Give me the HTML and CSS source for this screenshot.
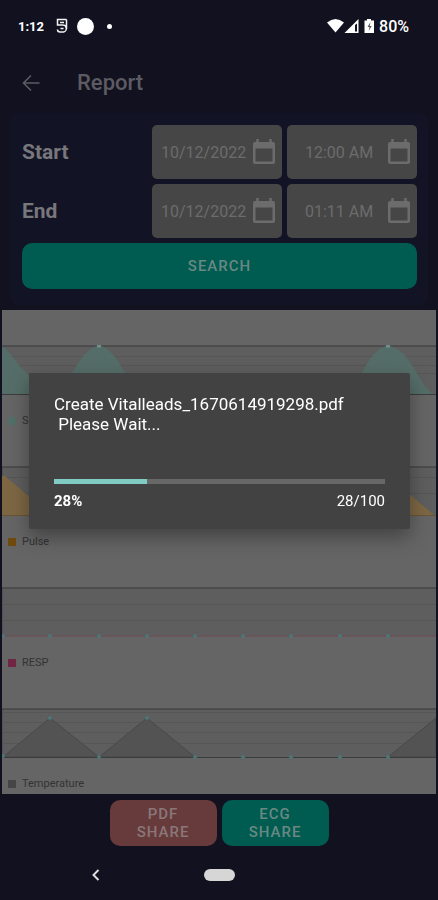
FILE: index.html
```html
<!DOCTYPE html>
<html lang="en">
<head>
  <meta charset="UTF-8" />
  <meta name="viewport" content="width=device-width, initial-scale=1.0"/>
  <title>Report</title>
  <link rel="stylesheet" href="styles.css">
</head>
<body>
  <div class="screen">
    <div class="status-bar">
      <span class="clock">1:12</span>
      <svg class="notice" width="12" height="16" viewBox="0 0 12 16"><path d="M10.500 1.500H1.500V7H6a3.500 3.500 0 0 1 1.500 7H4a2.500 2.500 0 0 1-2.500-2.500M10.500 1.500V11M4 4.500H8M4.500 10.500h3" fill="none" stroke="#f4f4f4" stroke-width="1.500"/></svg>
      <span class="bubble"></span>
      <span class="dot"></span>
      <svg class="wifi" width="48" height="16" viewBox="0 0 48 16">
        <path d="M0 4.500Q8.500-2.500 17 4.500L8.500 14.500z" fill="#fff"/>
        <path d="M17.500 15L31.500 1v14z" fill="#fff"/>
        <path d="M28 7v6.500h2V5.500z" fill="#12111f"/>
        <path d="M40 1h4v1.500h3V15H37.500V2.500H40z" fill="#fff"/>
        <path d="M43.500 4l-3 5h2l-.800 4 3-5h-2z" fill="#55555c"/>
      </svg>
      <span class="battery">80%</span>
    </div>

    <header class="app-bar">
      <button class="back" aria-label="Back">
        <svg width="18" height="18" viewBox="0 0 18 18"><path d="M17.500 9H1.500M9 1.500L1.500 9 9 16.500" fill="none" stroke="#5c5b63" stroke-width="1.600"/></svg>
      </button>
      <h1>Report</h1>
    </header>

    <form class="filter" onsubmit="return false">
      <div class="filter-row">
        <label for="startDate">Start</label>
        <div class="field">
          <input type="text" id="startDate" value="10/12/2022">
          <svg class="cal" viewBox="0 0 24 26"><use href="#calendar"/></svg>
        </div>
        <div class="field">
          <input type="text" class="time" aria-label="Start time" value="12:00 AM">
          <svg class="cal" viewBox="0 0 24 26"><use href="#calendar"/></svg>
        </div>
      </div>
      <div class="filter-row">
        <label for="endDate">End</label>
        <div class="field">
          <input type="text" id="endDate" value="10/12/2022">
          <svg class="cal" viewBox="0 0 24 26"><use href="#calendar"/></svg>
        </div>
        <div class="field">
          <input type="text" class="time" aria-label="End time" value="01:11 AM">
          <svg class="cal" viewBox="0 0 24 26"><use href="#calendar"/></svg>
        </div>
      </div>
      <button class="search">SEARCH</button>
    </form>

    <main class="charts">
      <figure class="chart">
        <svg class="plot" viewBox="0 0 434 51" preserveAspectRatio="none">
          <use href="#area"/>
          <path class="grid" d="M0 11.500H434M0 20.500H434M0 28.500H434"/>
          <path d="M0 1C10 8 15 20 24 27C32 36 38 46 48 49H0zM48 49C68 46 76 3 97 1C118 3 124 46 146 49zM338 49C360 44 364 3 386 1C409 3 418 44 432 49z" fill="#556d68"/>
          <path class="base" d="M0 49.500H434"/>
          <path d="M95 1h4M384 1h4" stroke="#719089" stroke-width="3"/>
        </svg>
        <figcaption><i class="key spo2"></i>SPO2</figcaption>
      </figure>
      <figure class="chart">
        <svg class="plot" viewBox="0 0 434 51" preserveAspectRatio="none">
          <use href="#area"/>
          <path class="grid" d="M0 11.500H434M0 27.500H434"/>
          <path d="M0 10H3L49 49H0zM386 10L432 49H340z" fill="#7d6743"/>
          <path d="M0 49.500H434" stroke="#685536"/>
        </svg>
        <figcaption><i class="key pulse"></i>Pulse</figcaption>
      </figure>
      <figure class="chart">
        <svg class="plot" viewBox="0 0 434 51" preserveAspectRatio="none">
          <use href="#area"/>
          <path class="grid" d="M0 17.500H434M0 33.500H434"/>
          <path d="M1 49H434" stroke="#704a54"/>
          <g fill="#4c7775"><circle cx="1" cy="49" r="2"/><circle cx="48" cy="49" r="2"/><circle cx="97" cy="49" r="2"/><circle cx="145" cy="49" r="2"/><circle cx="193" cy="49" r="2"/><circle cx="241" cy="49" r="2"/><circle cx="289" cy="49" r="2"/><circle cx="338" cy="49" r="2"/><circle cx="386" cy="49" r="2"/></g>
        </svg>
        <figcaption><i class="key resp"></i>RESP</figcaption>
      </figure>
      <figure class="chart">
        <svg class="plot" viewBox="0 0 434 51" preserveAspectRatio="none">
          <use href="#area"/>
          <path class="grid" d="M0 4.500H434M0 14.500H434M0 24.500H434M0 35.500H434"/>
          <path d="M1 49L48 10L97 49zM97 49L145 10L193 49zM386 49L434 10V49z" fill="#535353" stroke="#494949"/>
          <path class="base" d="M0 49.500H434"/>
          <g fill="#4c7775"><circle cx="1" cy="48" r="2"/><circle cx="48" cy="10" r="2"/><circle cx="97" cy="49" r="2"/><circle cx="145" cy="10" r="2"/><circle cx="193" cy="49" r="2"/><circle cx="241" cy="49" r="2"/><circle cx="289" cy="49" r="2"/><circle cx="338" cy="49" r="2"/><circle cx="386" cy="49" r="2"/></g>
        </svg>
        <figcaption><i class="key temp"></i>Temperature</figcaption>
      </figure>
    </main>

    <div class="share">
      <button class="pdf">PDF SHARE</button>
      <button class="ecg">ECG SHARE</button>
    </div>

    <nav class="nav-bar">
      <button aria-label="Back"><svg width="10" height="14" viewBox="0 0 10 14"><path d="M7.500 2L2.500 7l5 5" fill="none" stroke="#dedede" stroke-width="2"/></svg></button>
      <button class="home" aria-label="Home"></button>
      <span></span>
    </nav>
  </div>

  <div class="overlay">
    <div class="dialog" role="dialog" aria-labelledby="message">
      <p id="message">Create Vitalleads_1670614919298.pdf
 Please Wait...</p>
      <progress value="28" max="100" aria-labelledby="message"></progress>
      <div class="counts"><b>28%</b><span>28/100</span></div>
    </div>
  </div>

  <svg class="defs">
    <symbol id="calendar" viewBox="0 0 24 26">
      <path d="M3 3h18q2 0 2 2v18q0 2-2 2H3q-2 0-2-2V5q0-2 2-2zM3.500 9.500v13h17v-13z" fill="#6c6c6c" fill-rule="evenodd"/>
      <path d="M5.500 0v4M18.500 0v4" stroke="#6c6c6c" stroke-width="2.500"/>
    </symbol>
    <g id="area">
      <path d="M0 1H434V49H0z" fill="#5e5e5e"/>
      <path d="M.500 1V49" stroke="#505357"/>
      <path d="M0 1H434" stroke="#393939"/>
    </g>
  </svg>
</body>
</html>
```
FILE: styles.css
```css
* { box-sizing: border-box; }
body { margin: 0; background: #12111f; color: #77777c; font-family: Roboto, "Liberation Sans", sans-serif; }
button { border: none; padding: 0; background: none; font-family: inherit; cursor: pointer; }
.screen { min-height: 100vh; display: flex; flex-direction: column; }
.defs { position: absolute; width: 0; height: 0; }

.status-bar { display: flex; align-items: center; height: 52px; padding: 0 29px 0 18px; color: #fff; font-size: 16px; font-weight: 500; }
.clock { font-weight: 700; font-size: 13px; }
.notice { margin-left: 12px; }
.bubble { width: 17px; height: 17px; margin-left: 9px; border-radius: 50%; background: #fff; }
.dot { width: 5px; height: 5px; margin-left: 13px; border-radius: 50%; background: #fff; }
.wifi { margin-left: auto; margin-right: 4px; }

.app-bar { display: flex; align-items: center; height: 61px; padding: 0 22px; gap: 37px; }
.back { display: flex; }
h1 { margin: 0; font-size: 22px; font-weight: 500; color: #5c5b63; }

.filter { display: flex; flex-direction: column; gap: 5px; margin: 0 10px; padding: 12px 11px 16px 12px; background: #121324; border-radius: 8px; }
.filter-row { display: grid; grid-template-columns: 25fr 26fr 26fr; gap: 5px; align-items: center; }
.filter-row label { font-size: 21px; font-weight: 700; }
.field { display: flex; align-items: center; height: 54px; padding: 0 6px 0 9px; background: #464646; border-radius: 5px; }
.field input { flex: 1; width: 0; min-width: 0; padding: 0; border: none; background: none; color: #6c6c6c; font-family: inherit; font-size: 16px; }
.field .time { padding-left: 9px; }
.cal { flex: none; width: 24px; height: 26px; }
.search { height: 46px; background: #005b50; border-radius: 10px; color: #688983; font-size: 15px; font-weight: 500; letter-spacing: 1px; }

.charts { margin: 5px 2px 0; background: #656565; }
.chart { margin: 0; padding-top: 35px; }
.plot { display: block; width: 100%; height: 51px; }
.grid { stroke: #565656; }
.base { stroke: #3c3c3c; }
figcaption { display: flex; align-items: center; height: 35px; padding: 14px 6px 0; gap: 6px; font-size: 11px; line-height: 14px; color: #333; }
.key { width: 8px; height: 8px; }
.spo2 { background: #536f69; }
.pulse { background: #704a0c; }
.resp { background: #702542; }
.temp { background: #464646; }

.share { display: flex; justify-content: center; gap: 5px; margin-top: 6px; }
.share button { width: 107px; height: 46px; padding: 0 20px; border-radius: 10px; font-size: 15px; font-weight: 500; line-height: 18px; letter-spacing: 1px; }
.share .pdf { background: #673a3c; color: #8a7778; }
.share .ecg { background: #005b50; color: #688983; }

.nav-bar { display: grid; grid-template-columns: 1fr 31px 1fr; align-items: center; flex: 1; min-height: 54px; padding-top: 4px; }
.nav-bar button { display: flex; justify-content: center; padding-right: 12px; }
.nav-bar .home { height: 12px; border-radius: 6px; background: #d6d6d6; }

.overlay { position: fixed; inset: 0; display: flex; align-items: center; padding: 2px 28px 0 29px; }
.dialog { flex: 1; padding: 21px 25px 18px; background: #424242; border-radius: 2px; box-shadow: 0 8px 20px rgba(0,0,0,0.35); color: #fff; }
.dialog p { margin: 0; white-space: pre-wrap; font-size: 17px; line-height: 20px; }
progress { display: block; width: 100%; height: 5px; margin-top: 45px; border: none; appearance: none; background: #686868; }
progress::-webkit-progress-bar { background: #686868; }
progress::-webkit-progress-value { background: #80cbc4; }
progress::-moz-progress-bar { background: #80cbc4; }
.counts { display: flex; justify-content: space-between; margin-top: 7px; font-size: 15px; line-height: 20px; }
```
